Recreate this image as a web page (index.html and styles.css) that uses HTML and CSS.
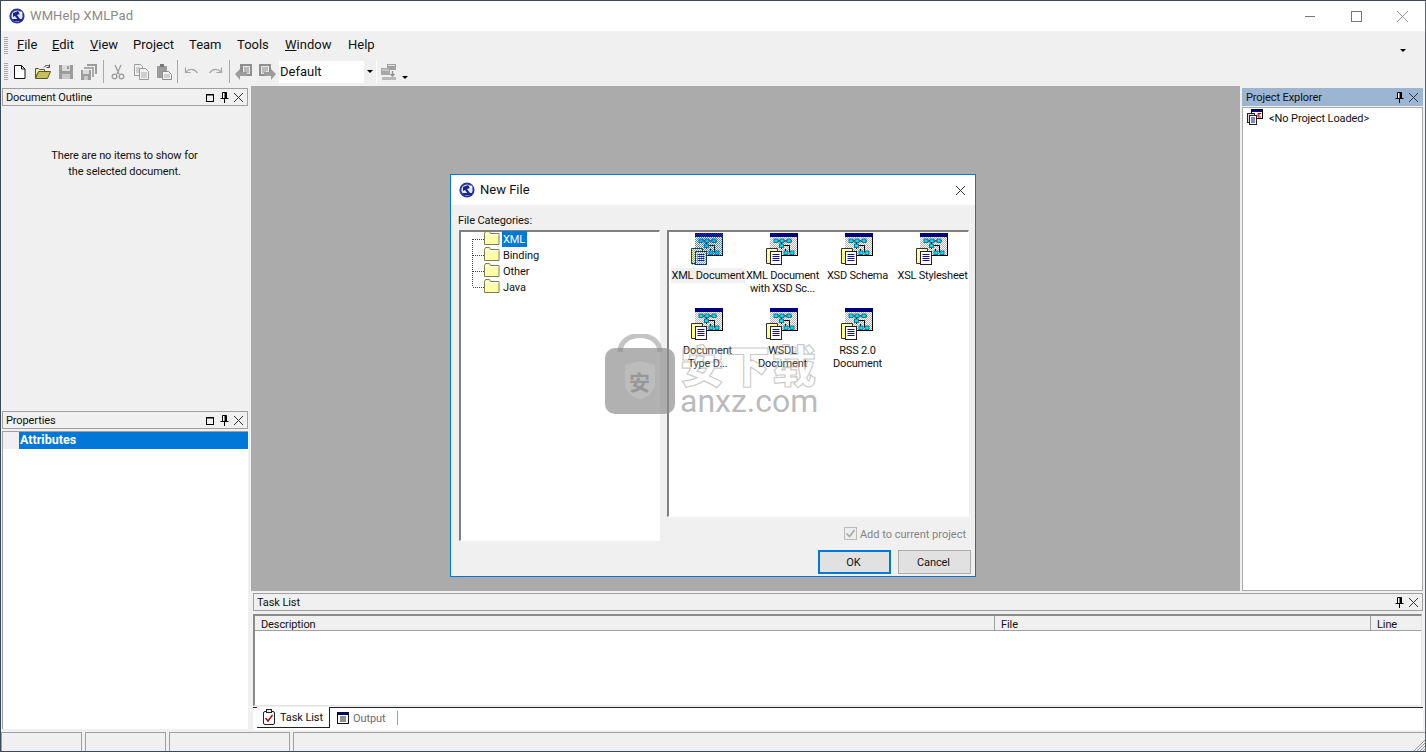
FILE: index.html
```html
<!DOCTYPE html>
<html lang="en">
<head>
<meta charset="utf-8">
<title>WMHelp XMLPad</title>
<link rel="stylesheet" href="styles.css">
</head>
<body>
<svg class="defs" width="0" height="0" aria-hidden="true">
  <defs>
    <pattern id="chk" width="2" height="2" patternUnits="userSpaceOnUse"><rect width="2" height="2" fill="#fff"/><rect width="1" height="1" fill="#b4b4b4"/><rect x="1" y="1" width="1" height="1" fill="#b4b4b4"/></pattern>
    <pattern id="blu" width="2" height="2" patternUnits="userSpaceOnUse"><rect width="1" height="1" fill="#0a5fd0"/><rect x="1" y="1" width="1" height="1" fill="#0a5fd0"/></pattern>
    <symbol id="logo" viewBox="0 0 16 16"><circle cx="8" cy="8" r="7.6" fill="#2a35a8"/><circle cx="8" cy="8" r="5.6" fill="#dfe6f5"/><path d="M4 5l5-2 2 3-3 1 3 4-2 1-3-4-2 1zM3 11h10v2H5z" fill="#1c2486"/><circle cx="12" cy="5" r="1.5" fill="#fff"/></symbol>
    <symbol id="doctree" viewBox="0 0 32 32">
      <rect x="4" y="0" width="28" height="23" fill="#000"/><rect x="4" y="0" width="28" height="4" fill="#00007f"/><rect x="4" y="4" width="27" height="18" fill="url(#chk)"/>
      <path d="M9 8h17M15.500 8v8M15.500 12.500h8M23.500 12.500v7M19.500 16v4" stroke="#000" fill="none"/>
      <g fill="#00e4ec" stroke="#00608a" stroke-width=".8"><rect x="8" y="6" width="4" height="3.500"/><rect x="14" y="6" width="4" height="3.500"/><rect x="21" y="6" width="4" height="3.500"/><rect x="13.500" y="11" width="4" height="3.500"/><rect x="18" y="18" width="4" height="3.500"/><rect x="24" y="18" width="4" height="3.500"/></g>
      <rect x=".5" y="15.500" width="11" height="15" fill="#ffff80"/><path d="M.5 15.500h11v15H.5z" fill="none" stroke="#333"/><path d="M2 17h8M2 19h2" stroke="#fff"/>
      <rect x="4.500" y="18.500" width="11" height="13" fill="#fff" stroke="#222"/><path d="M6.500 21.500h7M6.500 23.500h7M6.500 25.500h7M6.500 27.500h7" stroke="#10108a"/>
    </symbol>
    <symbol id="folder" viewBox="0 0 16 14"><path d="M.5 2.500l1-2h4l1 2h8.500v11H.5z" fill="#ffffa8" stroke="#7d7d5a"/><path d="M1.500 3.500h13" stroke="#fff"/></symbol>
    <symbol id="i-new" viewBox="0 0 16 16"><path d="M2.500 1.500h7l3.500 3.500v9.500H2.500z" fill="#fff" stroke="#111"/><path d="M9.500 1.500V5H13" fill="none" stroke="#111"/></symbol>
    <symbol id="i-open" viewBox="0 0 18 16"><path d="M1.500 4.500h3l1 1h5v2H5l-3.500 6z" fill="#f4f1b0" stroke="#55552a"/><path d="M1.500 14.500l3-7h12l-3 7z" fill="#c6c05a" stroke="#55552a"/><path d="M10 3.500c1-2 3-2.500 5-1.500M15.500 .5v3h-3" fill="none" stroke="#444"/></symbol>
    <symbol id="i-save" viewBox="0 0 16 16"><path d="M1 1h14v14H1z" fill="#9c9c9c"/><rect x="4" y="1" width="8" height="6" fill="#dcdcdc"/><rect x="9" y="2" width="2" height="3" fill="#9c9c9c"/><rect x="4" y="10" width="8" height="5" fill="#c8c8c8"/></symbol>
    <symbol id="i-saveall" viewBox="0 0 16 16"><path d="M6 0h10v10h-2V2H6z" fill="#9c9c9c"/><path d="M3 3h10v10h-2V5H3z" fill="#aaa"/><path d="M0 6h10v10H0z" fill="#9c9c9c"/><rect x="2" y="6" width="6" height="4" fill="#dcdcdc"/><rect x="3" y="12" width="4" height="4" fill="#c8c8c8"/></symbol>
    <symbol id="i-cut" viewBox="0 0 16 16"><g fill="none" stroke="#9a9a9a" stroke-width="1.300"><path d="M5 1l4 9M11 1L7 10"/><circle cx="4.500" cy="12.500" r="2.300"/><circle cx="11.500" cy="12.500" r="2.300"/></g></symbol>
    <symbol id="i-copy" viewBox="0 0 16 16"><g fill="#f2f2f2" stroke="#9a9a9a"><path d="M1.500 .5h6l2 2v9h-8z"/><path d="M6.500 4.500h6l3 3v8h-9z"/></g><path d="M3 4h4M3 6h3M3 8h3M8 9h6M8 11h6M8 13h6" stroke="#aaa"/></symbol>
    <symbol id="i-paste" viewBox="0 0 16 16"><path d="M1 2h10v12H1z" fill="#9c9c9c"/><rect x="4" y="0" width="4" height="3" fill="#777"/><path d="M6.500 7.500h6l3 3v5h-9z" fill="#f4f4f4" stroke="#8a8a8a"/><path d="M8 11h6M8 13h6" stroke="#aaa"/></symbol>
    <symbol id="i-undo" viewBox="0 0 16 16"><path d="M1.500 3.500v5h5M2 8c3-3.500 8-4 11.500 1" fill="none" stroke="#a5a5a5" stroke-width="1.200"/></symbol>
    <symbol id="i-redo" viewBox="0 0 16 16"><path d="M14.500 3.500v5h-5M14 8c-3-3.500-8-4-11.500 1" fill="none" stroke="#a5a5a5" stroke-width="1.200"/></symbol>
    <symbol id="i-back" viewBox="0 0 18 18"><path d="M5 1h12v12H5z" fill="#8f8f8f"/><path d="M8 3h7v8H8z" fill="#e6e6e6"/><path d="M9 5h5M9 7h5M9 9h5" stroke="#8f8f8f"/><path d="M0 11l5-5v3h7v4H5v4z" fill="#9c9c9c"/></symbol>
    <symbol id="i-fwd" viewBox="0 0 18 18"><path d="M1 1h12v12H1z" fill="#8f8f8f"/><path d="M3 3h8v8H3z" fill="#e6e6e6"/><path d="M4 5h6M4 7h6M4 9h4" stroke="#8f8f8f"/><path d="M18 11l-5-5v3H6v4h7v4z" fill="#9c9c9c"/></symbol>
    <symbol id="i-deploy" viewBox="0 0 18 18"><path d="M7 1h9v6H7z" fill="#a0a0a0"/><path d="M8 2h7v1H8z" fill="#e0e0e0"/><path d="M1 5h9v7H1z" fill="#a8a8a8"/><path d="M2 7h7" stroke="#ddd"/><path d="M12.500 8v5M10.500 11l2 2 2-2" fill="none" stroke="#8f8f8f" stroke-width="1.400"/><path d="M2 14h14v3H2z" fill="#b8b8b8"/></symbol>
    <symbol id="i-float" viewBox="0 0 11 11"><rect x="1.500" y="2.500" width="7" height="7" fill="none" stroke="#000" stroke-width="1"/><path d="M1 3h8" stroke="#000"/></symbol>
    <symbol id="i-pin" viewBox="0 0 11 11"><path d="M3.500 .5h4v6h-4z" fill="#fff" stroke="#000"/><path d="M6 1v5h1.500V1zM1.500 6.500h8M5.500 7v4" stroke="#000" fill="#000"/></symbol>
    <symbol id="i-close" viewBox="0 0 11 11"><path d="M1 1l9 9M10 1l-9 9" stroke="#333" fill="none"/></symbol>
    <symbol id="i-project" viewBox="0 0 16 16"><rect x="4.500" y=".5" width="11" height="9" fill="#fff" stroke="#000"/><rect x="5" y="1" width="10" height="2" fill="#00007f"/><path d="M11 4.500h3M11 6h2M11 8h3M11 4.500v3.500" stroke="#b00" fill="none"/><rect x=".5" y="4.500" width="7" height="9" fill="#ddd" stroke="#222"/><rect x="2.500" y="6.500" width="7" height="9" fill="#fff" stroke="#222"/><path d="M4 9h4M4 11h4M4 13h4" stroke="#10108a"/></symbol>
    <symbol id="i-task" viewBox="0 0 14 16"><rect x="1.500" y="2.500" width="11" height="13" rx="1.500" fill="#fff" stroke="#222"/><rect x="4.500" y=".5" width="5" height="3" fill="#e8e8e8" stroke="#222"/><path d="M3.500 9l2.500 3 4.500-6" fill="none" stroke="#a01018" stroke-width="1.500"/></symbol>
    <symbol id="i-output" viewBox="0 0 12 12"><rect x=".5" y=".5" width="11" height="11" fill="#fff" stroke="#111"/><rect x="1" y="1" width="10" height="2" fill="#00007f"/><path d="M3 5h6M3 7h6M3 9h6" stroke="#222"/></symbol>
    <symbol id="i-check" viewBox="0 0 13 13"><rect x=".5" y=".5" width="12" height="12" fill="#eee" stroke="#bbb"/><path d="M2.500 6.500l3 3 5-6.500" fill="none" stroke="#a8a8a8" stroke-width="1.600"/></symbol>
    <symbol id="c-top" viewBox="0 0 12 16"><path d="M.5 8v8M1 8.500h11" stroke="#444" stroke-dasharray="1 1" fill="none"/></symbol>
    <symbol id="c-mid" viewBox="0 0 12 16"><path d="M.5 0v16M1 8.500h11" stroke="#444" stroke-dasharray="1 1" fill="none"/></symbol>
    <symbol id="c-end" viewBox="0 0 12 16"><path d="M.5 0v8M1 8.500h11" stroke="#444" stroke-dasharray="1 1" fill="none"/></symbol>
  </defs>
</svg>

<div class="app">
  <header class="titlebar">
    <svg class="logo16"><use href="#logo"/></svg>
    <span class="apptitle">WMHelp XMLPad</span>
    <div class="winctl">
      <svg class="wc" viewBox="0 0 46 11"><path d="M18 5.500h10" stroke="#777"/></svg>
      <svg class="wc" viewBox="0 0 46 11"><rect x="18.500" y=".5" width="10" height="10" fill="none" stroke="#777"/></svg>
      <svg class="wc" viewBox="0 0 46 11"><path d="M18 0l11 11M29 0L18 11" stroke="#999" fill="none"/></svg>
    </div>
  </header>

  <nav class="menubar">
    <span class="grip"></span>
    <span class="mi m-file"><u>F</u>ile</span>
    <span class="mi m-edit"><u>E</u>dit</span>
    <span class="mi m-view"><u>V</u>iew</span>
    <span class="mi m-proj">Project</span>
    <span class="mi m-team">Team</span>
    <span class="mi m-tools">Tools</span>
    <span class="mi m-win"><u>W</u>indow</span>
    <span class="mi m-help">Help</span>
    <span class="spacer"></span>
    <span class="caret caret-menu"></span>
  </nav>

  <div class="toolbar">
    <span class="grip"></span>
    <span class="tb"><svg class="t16"><use href="#i-new"/></svg></span>
    <span class="tb"><svg class="t18"><use href="#i-open"/></svg></span>
    <span class="tb"><svg class="t16"><use href="#i-save"/></svg></span>
    <span class="tb"><svg class="t16"><use href="#i-saveall"/></svg></span>
    <span class="sep"></span>
    <span class="tb"><svg class="t16"><use href="#i-cut"/></svg></span>
    <span class="tb"><svg class="t16"><use href="#i-copy"/></svg></span>
    <span class="tb"><svg class="t16"><use href="#i-paste"/></svg></span>
    <span class="sep sep-n"></span>
    <span class="tb"><svg class="t16"><use href="#i-undo"/></svg></span>
    <span class="tb"><svg class="t16"><use href="#i-redo"/></svg></span>
    <span class="sep"></span>
    <span class="tb"><svg class="t18"><use href="#i-back"/></svg></span>
    <span class="tb"><svg class="t18"><use href="#i-fwd"/></svg></span>
    <div class="combo"><span class="combo-v">Default</span><span class="combo-b"><span class="caret"></span></span></div>
    <span class="tb"><svg class="t18"><use href="#i-deploy"/></svg></span>
    <span class="caret caret-tb"></span>
  </div>

  <main class="main">
    <aside class="leftcol">
      <section class="panel outline">
        <div class="phead"><span class="ptitle">Document Outline</span><svg class="pi"><use href="#i-float"/></svg><svg class="pi"><use href="#i-pin"/></svg><svg class="pi"><use href="#i-close"/></svg></div>
        <p class="empty">There are no items to show for<br>the selected document.</p>
      </section>
      <section class="panel props">
        <div class="phead"><span class="ptitle">Properties</span><svg class="pi"><use href="#i-float"/></svg><svg class="pi"><use href="#i-pin"/></svg><svg class="pi"><use href="#i-close"/></svg></div>
        <div class="propgrid">
          <div class="proprow"><span class="gutter"></span><span class="attr">Attributes</span></div>
        </div>
      </section>
    </aside>

    <div class="rightarea">
      <div class="toprow">
        <div class="workspace">
          <div class="dialog">
            <div class="dlg-title">
              <svg class="logo16"><use href="#logo"/></svg>
              <span class="dlg-name">New File</span>
              <svg class="dlg-x"><use href="#i-close"/></svg>
            </div>
            <div class="dlg-body">
              <div class="dlg-label">File Categories:</div>
              <div class="dlg-panes">
                <div class="tree inset">
                  <div class="trow"><svg class="conn"><use href="#c-top"/></svg><svg class="fold"><use href="#folder"/></svg><span class="tlabel sel">XML</span></div>
                  <div class="trow"><svg class="conn"><use href="#c-mid"/></svg><svg class="fold"><use href="#folder"/></svg><span class="tlabel">Binding</span></div>
                  <div class="trow"><svg class="conn"><use href="#c-mid"/></svg><svg class="fold"><use href="#folder"/></svg><span class="tlabel">Other</span></div>
                  <div class="trow"><svg class="conn"><use href="#c-end"/></svg><svg class="fold"><use href="#folder"/></svg><span class="tlabel">Java</span></div>
                </div>
                <div class="rightpane">
                  <div class="icons inset">
                    <div class="item">
                      <svg class="big" viewBox="0 0 32 32"><use href="#doctree"/><path d="M4 0h28v23H16v9H0V15h4z" fill="url(#blu)" opacity=".55"/></svg>
                      <span class="ilabel isel">XML Document</span>
                    </div>
                    <div class="item"><svg class="big" viewBox="0 0 32 32"><use href="#doctree"/></svg><span class="ilabel">XML Document<br>with XSD Sc...</span></div>
                    <div class="item"><svg class="big" viewBox="0 0 32 32"><use href="#doctree"/></svg><span class="ilabel">XSD Schema</span></div>
                    <div class="item"><svg class="big" viewBox="0 0 32 32"><use href="#doctree"/></svg><span class="ilabel">XSL Stylesheet</span></div>
                    <div class="item"><svg class="big" viewBox="0 0 32 32"><use href="#doctree"/></svg><span class="ilabel">Document<br>Type D...</span></div>
                    <div class="item"><svg class="big" viewBox="0 0 32 32"><use href="#doctree"/></svg><span class="ilabel">WSDL<br>Document</span></div>
                    <div class="item"><svg class="big" viewBox="0 0 32 32"><use href="#doctree"/></svg><span class="ilabel">RSS 2.0<br>Document</span></div>
                  </div>
                  <div class="addrow"><svg class="chk"><use href="#i-check"/></svg><span class="addlabel">Add to current project</span></div>
                  <div class="btnrow"><span class="btn btn-ok">OK</span><span class="btn">Cancel</span></div>
                </div>
              </div>
            </div>
          </div>
        </div>
        <aside class="explorer">
          <div class="phead phead-active"><span class="ptitle">Project Explorer</span><svg class="pi"><use href="#i-pin"/></svg><svg class="pi"><use href="#i-close"/></svg></div>
          <div class="exp-body"><svg class="pj"><use href="#i-project"/></svg><span>&lt;No Project Loaded&gt;</span></div>
        </aside>
      </div>

      <section class="tasks">
        <div class="phead"><span class="ptitle">Task List</span><svg class="pi"><use href="#i-pin"/></svg><svg class="pi"><use href="#i-close"/></svg></div>
        <div class="table">
          <div class="thead"><span class="th th-d">Description</span><span class="th th-f">File</span><span class="th th-l">Line</span></div>
        </div>
        <div class="tabs">
          <div class="tabstub"></div>
          <div class="tab tab-on"><svg class="tabi"><use href="#i-task"/></svg><span>Task List</span></div>
          <div class="tab tab-off"><svg class="tabo"><use href="#i-output"/></svg><span>Output</span></div>
          <div class="tabrest"></div>
        </div>
      </section>
    </div>
  </main>

  <footer class="status">
    <span class="sb sb1"></span><span class="sb sb2"></span><span class="sb sb3"></span>
    <span class="sb sb4"><svg class="rgrip" viewBox="0 0 12 12"><path d="M12 1L1 12M12 4l-8 8M12 7l-5 5M12 10l-2 2" stroke="#999" fill="none"/></svg></span>
  </footer>
</div>

<div class="wm">
  <div class="lock">
    <svg class="lockart" viewBox="0 0 70 80"><path d="M15 18C15 -4 55 -4 55 18" fill="none" stroke="#c4c4c4" stroke-width="5"/><rect y="14" width="70" height="66" rx="10" fill="#8c8c8c" fill-opacity=".68"/><path d="M20 31l15-4 15 4v18c0 9-8 14-15 17-7-3-15-8-15-17z" fill="#fff" fill-opacity=".14"/></svg>
    <span class="lockchar">安</span>
  </div>
  <div class="wmtext"><span class="wm-cn">安下载</span><span class="wm-en">anxz.com</span></div>
</div>
</body>
</html>
```
FILE: styles.css
```css
* { box-sizing: border-box; }
html, body { margin: 0; padding: 0; }
body { width: 1426px; height: 752px; overflow: hidden; position: relative; background: #f0f0f0; font: 11px/16px Roboto, "Liberation Sans", sans-serif; letter-spacing: -.1px; color: #111; }
.defs { position: absolute; }
svg { display: block; flex: none; }
p { margin: 0; }

.app { height: 752px; display: flex; flex-direction: column; border: 1px solid #3b4a5a; border-right-color: #5b6570; }

.titlebar { height: 30px; flex: none; background: #fff; display: flex; align-items: center; padding-left: 8px; }
.logo16 { width: 16px; height: 16px; }
.apptitle { margin-left: 5px; font-size: 13px; color: #8a8a8a; letter-spacing: .1px; }
.winctl { margin-left: auto; display: flex; }
.wc { width: 46px; height: 11px; }

.menubar { height: 26px; flex: none; display: flex; align-items: center; font-size: 13px; letter-spacing: 0; padding: 2px 19px 0 3px; }
.grip { width: 4px; height: 17px; margin-right: 9px; flex: none; background: repeating-linear-gradient(to bottom, #a9a9a9 0 1px, #f0f0f0 1px 2px); }
.mi { flex: none; }
.mi u { text-decoration-thickness: 1px; }
.m-file { width: 35px; } .m-edit { width: 38px; } .m-view { width: 43px; } .m-proj { width: 56px; }
.m-team { width: 48px; } .m-tools { width: 48px; } .m-win { width: 63px; } .m-help { width: 30px; }
.spacer { flex: 1; }
.caret { width: 0; height: 0; border-left: 3px solid transparent; border-right: 3px solid transparent; border-top: 3px solid #000; flex: none; display: block; }
.caret-menu { margin-top: 10px; }

.toolbar { height: 29px; flex: none; display: flex; align-items: center; padding-left: 3px; }
.toolbar .grip { margin-right: 0; }
.tb { width: 23px; height: 22px; display: flex; align-items: center; justify-content: center; flex: none; }
.t16 { width: 16px; height: 16px; }
.t18 { width: 18px; height: 18px; }
.sep { width: 1px; height: 23px; background: #a9a9a9; margin: 0 2px 0 3px; flex: none; }
.sep-n { margin: 0 2px 0 2px; }
.combo { width: 98px; height: 22px; margin-left: 1px; background: #fff; display: flex; font-size: 13px; letter-spacing: 0; flex: none; }
.combo-v { flex: 1; padding-left: 1px; line-height: 21px; }
.combo-b { width: 12px; margin: 0 1px 0 0; background: #efefef; display: flex; align-items: center; justify-content: center; }
.caret-tb { margin-left: 2px; margin-top: 12px; }

.main { flex: 1; min-height: 0; display: flex; }
.leftcol { width: 250px; flex: none; display: flex; flex-direction: column; padding: 2px 3px 1px 1px; }
.panel { display: flex; flex-direction: column; }
.outline { height: 323px; }
.props { flex: 1; min-height: 0; }
.phead { height: 18px; flex: none; display: flex; align-items: center; gap: 3px; border: 1px solid #a0a0a0; background: #f0f0f0; padding: 0 3px; }
.ptitle { flex: 1; white-space: nowrap; padding-top: 2px; }
.pi { width: 11px; height: 11px; }
.empty { text-align: center; margin-top: 42px; padding-right: 1px; }
.propgrid { flex: 1; margin-top: 2px; background: #fff; border-top: 1px solid #a0a0a0; border-left: 1px solid #a0a0a0; }
.proprow { display: flex; height: 17px; }
.gutter { width: 16px; background: #f0f0f0; }
.attr { flex: 1; background: #0078d7; color: #fff; font-weight: 700; padding-left: 1px; line-height: 16px; font-size: 12.500px; letter-spacing: 0; }

.rightarea { flex: 1; min-width: 0; display: flex; flex-direction: column; }
.toprow { height: 505px; flex: none; display: flex; }
.workspace { width: 989px; flex: none; background: #ababab; position: relative; }
.explorer { flex: 1; min-width: 0; padding: 2px 2px 0 2px; display: flex; flex-direction: column; }
.phead-active { background: #9bb5d3; border-color: #9bb5d3; }
.exp-body { flex: 1; margin-top: 1px; background: #fff; border: 1px solid #a9a9a9; display: flex; align-items: flex-start; padding: 1px 0 0 4px; }
.pj { width: 16px; height: 16px; }
.exp-body span { margin-left: 6px; line-height: 20px; }

.tasks { flex: 1; min-height: 0; display: flex; flex-direction: column; padding: 2px 2px 0 2px; }
.table { height: 92px; flex: none; margin: 3px 1px 0 0; background: #fff; border-top: 2px solid #8a8a8a; border-left: 2px solid #8a8a8a; border-right: 1px solid #e4e4e4; border-bottom: 1px solid #e4e4e4; }
.thead { height: 15px; display: flex; background: #f0f0f0; border-bottom: 1px solid #a0a0a0; }
.th { padding: 1px 0 0 6px; line-height: 15px; border-right: 1px solid #a0a0a0; flex: none; }
.th-d { width: 740px; } .th-f { width: 376px; } .th-l { flex: 1; border-right: 0; }
.tabs { height: 23px; flex: none; display: flex; background: #fff; margin-top: 1px; }
.tabstub { width: 4px; height: 1px; background: #222; flex: none; }
.tab { display: flex; align-items: center; }
.tab span { padding-top: 2px; }
.tab-on { width: 73px; height: 21px; padding-left: 5px; border-right: 1px solid #222; border-bottom: 1px solid #222; gap: 4px; }
.tabi { width: 14px; height: 16px; }
.tab-off { width: 68px; height: 21px; border-top: 1px solid #222; padding-left: 7px; gap: 4px; color: #6a6a7a; }
.tab-off::after { content: ""; width: 1px; height: 14px; background: #a0a0a0; margin-left: auto; }
.tabo { width: 12px; height: 12px; }
.tabrest { flex: 1; height: 1px; background: #222; }

.status { height: 21px; flex: none; display: flex; gap: 3px; padding-top: 2px; background: #f0f0f0; }
.sb { border: 1px solid #a0a0a0; border-bottom: 0; flex: none; height: 19px; }
.sb1 { width: 81px; } .sb2 { width: 81px; } .sb3 { width: 121px; }
.sb4 { flex: 1; border-right: 0; display: flex; justify-content: flex-end; align-items: flex-end; }
.rgrip { width: 12px; height: 12px; }

.dialog { position: absolute; left: 199px; top: 88px; width: 526px; height: 403px; border: 1px solid #0078d7; background: #f0f0f0; display: flex; flex-direction: column; }
.dlg-title { height: 30px; flex: none; background: #fff; display: flex; align-items: center; padding: 0 9px 0 8px; }
.dlg-name { margin-left: 5px; font-size: 13px; letter-spacing: 0; flex: 1; }
.dlg-x { width: 11px; height: 11px; }
.dlg-body { flex: 1; display: flex; flex-direction: column; padding: 8px 4px 0 7px; }
.dlg-label { height: 17px; flex: none; line-height: 16px; }
.dlg-panes { display: flex; gap: 7px; flex: 1; padding-left: 1px; }
.inset { background: #fff; border-top: 2px solid #808080; border-left: 2px solid #808080; border-right: 1px solid #fff; border-bottom: 1px solid #fff; }
.tree { width: 201px; height: 311px; padding: 0 0 0 11px; }
.trow { height: 16px; display: flex; align-items: center; }
.trow:first-child { margin-top: -1px; }
.conn { width: 12px; height: 16px; }
.fold { width: 16px; height: 14px; margin-top: -2px; }
.tlabel { margin-left: 2px; padding: 1px 1px 0; height: 16px; line-height: 15px; }
.tlabel.sel { background: #0078d7; color: #fff; padding: 1px 2px 0 1px; }
.rightpane { width: 304px; flex: none; display: flex; flex-direction: column; }
.icons { width: 302px; height: 287px; display: grid; grid-template-columns: repeat(4, 75px); grid-auto-rows: 75px; align-content: start; padding: 1px 0 0 1px; }
.item { display: flex; flex-direction: column; align-items: center; }
.big { width: 32px; height: 32px; margin-right: 1px; }
.ilabel { margin-top: 3px; text-align: center; line-height: 13px; white-space: nowrap; padding: 1px; min-height: 15px; letter-spacing: -.2px; }
.isel { background: #f0f0f0; width: 74px; }
.addrow { width: 302px; height: 33px; flex: none; display: flex; align-items: center; justify-content: flex-end; padding: 0 3px 0 0; color: #858585; gap: 3px; letter-spacing: 0; }
.addlabel { padding-top: 2px; }
.chk { width: 13px; height: 13px; }
.btnrow { display: flex; gap: 7px; padding-left: 151px; }
.btn { width: 73px; height: 24px; background: #e1e1e1; border: 1px solid #adadad; text-align: center; line-height: 22px; padding: 1px 2px 0 0; flex: none; }
.btn-ok { border: 2px solid #0078d7; line-height: 20px; }

.wm { position: absolute; left: 605px; top: 334px; display: flex; gap: 5px; pointer-events: none; letter-spacing: 0; }
.lock { width: 70px; height: 80px; position: relative; }
.lockart { width: 70px; height: 80px; }
.lockchar { position: absolute; left: 24px; top: 35px; font: 700 21px/24px "Noto Sans CJK SC", sans-serif; color: rgba(120,120,120,.55); }
.wmtext { display: flex; flex-direction: column; margin-top: 7px; }
.wm-cn { font: 900 44px/46px "Noto Sans CJK SC", sans-serif; color: rgba(255,255,255,.2); -webkit-text-stroke: 1.2px rgba(150,150,150,.5); height: 44px; letter-spacing: 2px; white-space: nowrap; }
.wm-en { font: 400 32px/32px Roboto, sans-serif; color: rgba(140,140,140,.6); white-space: nowrap; }
```
